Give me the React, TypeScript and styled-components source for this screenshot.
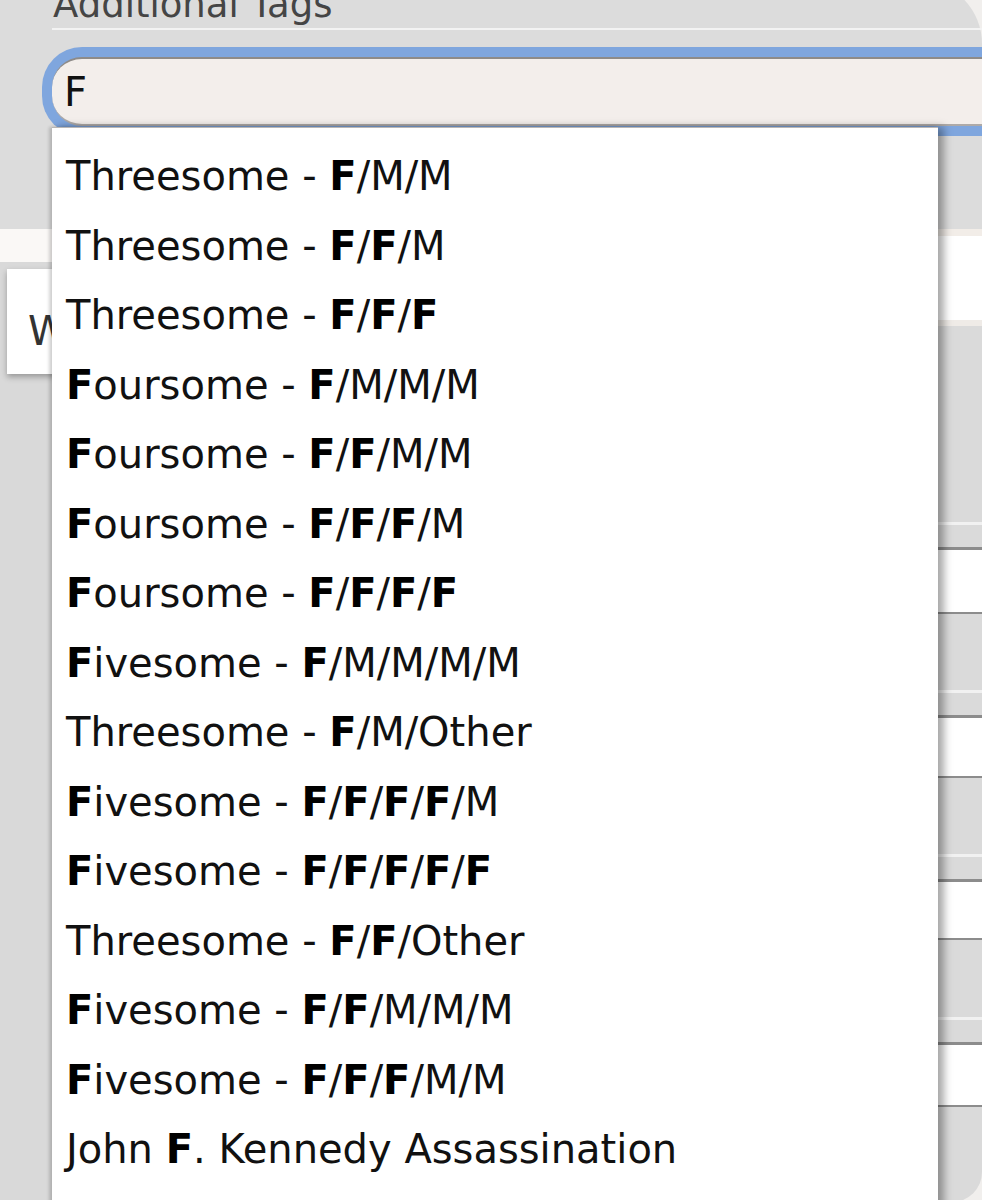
import React from "react";
import styled, { createGlobalStyle } from "styled-components";

const GlobalStyle = createGlobalStyle`
  html, body { margin: 0; padding: 0; background: #f1efed; }
  body { font-family: "DejaVu Sans", Verdana, sans-serif; overflow: hidden; }
  #root { width: 982px; }
`;

const Page = styled.div`
  position: relative;
  width: 982px;
  height: 1200px;
  overflow: hidden;
`;

const Panel = styled.section`
  margin-top: -20px;
  padding: 6px 0 93px;
  background: #dcdcdc;
  border-top-right-radius: 64px;
`;

const Heading = styled.h2`
  margin: 0;
  padding-left: 53px;
  font-size: 37px;
  line-height: 37px;
  height: 37px;
  font-weight: normal;
  color: #454545;
  white-space: nowrap;
`;

const Rule = styled.div`
  margin: 5px 0 0 52px;
  height: 2px;
  background: #f3f3f3;
`;

const FocusRing = styled.div`
  margin: 17px -40px 0 42px;
  padding: 10px 0 10px 10px;
  background: #7fa6de;
  border-radius: 40px 0 0 40px;
`;

const TextField = styled.div`
  box-sizing: border-box;
  height: 69px;
  display: flex;
  align-items: center;
  padding-left: 12px;
  background: #f3eeeb;
  border-top: 2px solid #8e8b89;
  border-bottom: 2px solid #aeaaa8;
  border-radius: 30px 0 0 30px;
  font-size: 40px;
  color: #111;
`;

const Lower = styled.div`
  display: flex;
  height: 973px;
`;

const LeftCol = styled.div`
  flex: 0 0 470px;
  display: flex;
  flex-direction: column;
  background: #d9d9d9;
`;

const WhiteBand = styled.div`
  height: 33px;
  background: #faf8f6;
`;

const Card = styled.div`
  box-sizing: border-box;
  margin: 7px 0 0 7px;
  height: 105px;
  padding: 42px 0 0 21px;
  background: #fff;
  box-shadow: 0 3px 6px rgba(0, 0, 0, 0.3);
  font-size: 40px;
  line-height: 40px;
  color: #333;
`;

const RightCol = styled.div`
  flex: 1;
  display: flex;
  flex-direction: column;
`;

const FirstRow = styled.div`
  height: 97px;
  box-sizing: border-box;
  background: #fff;
  border-top: 7px solid #f2ede8;
  border-bottom: 6px solid #efebe7;
`;

const WhiteRow = styled.div<{ $h: number }>`
  height: ${(p) => p.$h}px;
  background: #fff;
`;

const GrayBlock = styled.div<{ $h: number; $last?: boolean; $noTop?: boolean }>`
  box-sizing: border-box;
  height: ${(p) => p.$h}px;
  display: flex;
  flex-direction: column;
  justify-content: flex-end;
  background: #dadada;
  border-top: ${(p) => (p.$noTop ? "none" : "2px solid #8c8c8c")};
  border-bottom: ${(p) => (p.$last ? "none" : "3px solid #8c8c8c")};
  border-bottom-right-radius: ${(p) => (p.$last ? "30px" : "0")};
  &::after {
    content: "";
    display: ${(p) => (p.$last ? "none" : "block")};
    height: 3px;
    margin-bottom: 22px;
    background: #f1f1f1;
  }
`;

const Menu = styled.ul`
  position: absolute;
  top: 127px;
  left: 52px;
  width: 886px;
  margin: 0;
  padding: 14px 0 40px;
  list-style: none;
  background: #fff;
  border-top: 1px solid #b9b6b4;
  box-shadow: -3px 0 3px rgba(0, 0, 0, 0.16), 6px 0 8px rgba(0, 0, 0, 0.35);
`;

const Option = styled.li`
  padding-left: 14px;
  font-size: 40px;
  line-height: 69.5px;
  color: #111;
  white-space: nowrap;
`;

const Match = styled.b`
  font-weight: bold;
  color: #000;
`;

const options = [
  "Threesome - F/M/M",
  "Threesome - F/F/M",
  "Threesome - F/F/F",
  "Foursome - F/M/M/M",
  "Foursome - F/F/M/M",
  "Foursome - F/F/F/M",
  "Foursome - F/F/F/F",
  "Fivesome - F/M/M/M/M",
  "Threesome - F/M/Other",
  "Fivesome - F/F/F/F/M",
  "Fivesome - F/F/F/F/F",
  "Threesome - F/F/Other",
  "Fivesome - F/F/M/M/M",
  "Fivesome - F/F/F/M/M",
  "John F. Kennedy Assassination",
];

function highlight(label: string) {
  const parts = label.split("F");
  const out: React.ReactNode[] = [];
  parts.forEach((p, i) => {
    if (i > 0) out.push(<Match key={`m${i}`}>F</Match>);
    if (p) out.push(<React.Fragment key={`t${i}`}>{p}</React.Fragment>);
  });
  return out;
}

export default function App() {
  return (
    <Page>
      <GlobalStyle />
      <Panel>
        <Heading>Additional Tags</Heading>
        <Rule />
        <FocusRing>
          <TextField>F</TextField>
        </FocusRing>
      </Panel>
      <Lower>
        <LeftCol>
          <WhiteBand />
          <Card>W</Card>
        </LeftCol>
        <RightCol>
          <FirstRow />
          <GrayBlock $h={224} $noTop />
          <WhiteRow $h={62} />
          <GrayBlock $h={106} />
          <WhiteRow $h={58} />
          <GrayBlock $h={106} />
          <WhiteRow $h={56} />
          <GrayBlock $h={107} />
          <WhiteRow $h={60} />
          <GrayBlock $h={97} $last />
        </RightCol>
      </Lower>
      <Menu>
        {options.map((o) => (
          <Option key={o}>{highlight(o)}</Option>
        ))}
      </Menu>
    </Page>
  );
}
